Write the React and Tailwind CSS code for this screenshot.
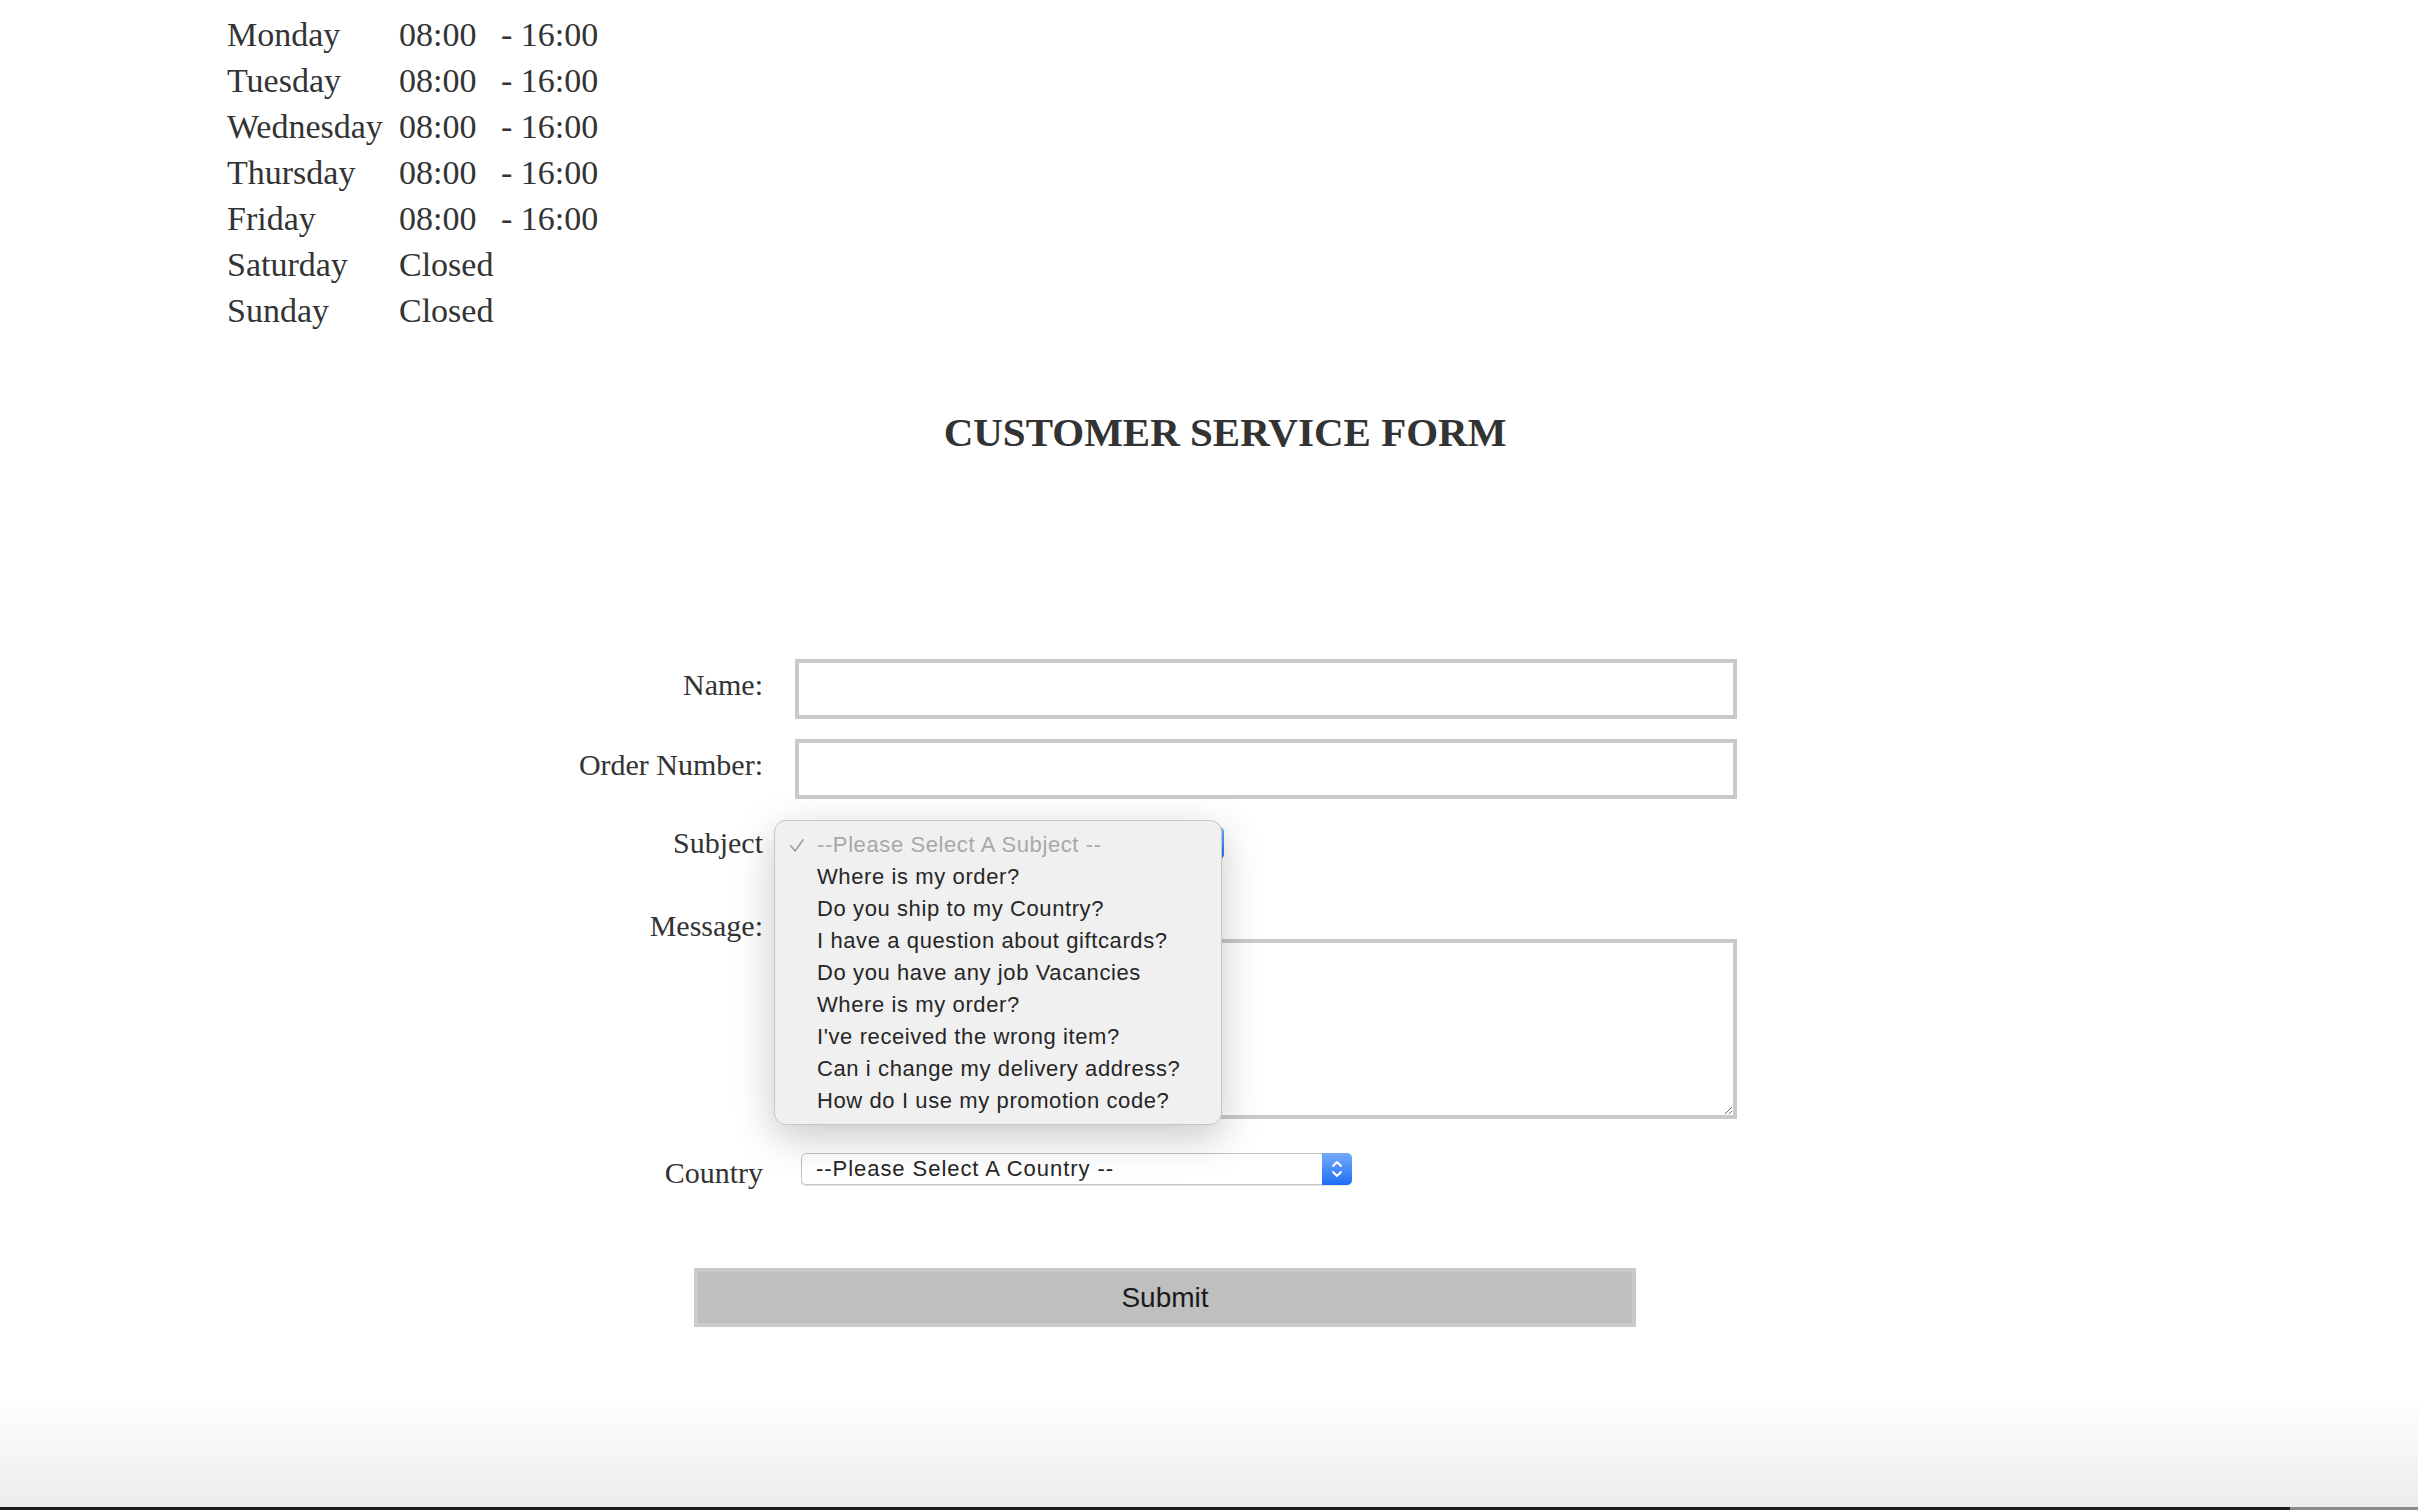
import React from 'react';

const hours = [
  ['Monday', true],
  ['Tuesday', true],
  ['Wednesday', true],
  ['Thursday', true],
  ['Friday', true],
  ['Saturday', false],
  ['Sunday', false],
];

const subjects = [
  'Where is my order?',
  'Do you ship to my Country?',
  'I have a question about giftcards?',
  'Do you have any job Vacancies',
  'Where is my order?',
  "I've received the wrong item?",
  'Can i change my delivery address?',
  'How do I use my promotion code?',
];

function SelectBox({ text, width }) {
  return (
    <div
      className={`flex h-[32px] ${width} items-stretch rounded-[5px] border border-[#c2c2c2] bg-white shadow-[0_1px_1px_rgba(0,0,0,0.12)]`}
    >
      <span className="flex-1 truncate pl-[14px] font-['Liberation_Sans',sans-serif] text-[22px] leading-[30px] tracking-[0.95px] text-[#262626]">
        {text}
      </span>
      <span className="-my-px -mr-px flex w-[30px] items-center justify-center rounded-r-[5px] bg-linear-to-b from-[#74aaf8] to-[#1a6cf6]">
        <svg width="12" height="20" viewBox="0 0 12 20" fill="none" stroke="white" strokeWidth="2" strokeLinecap="round" strokeLinejoin="round">
          <path d="M2 7 L6 3 L10 7" />
          <path d="M2 13 L6 17 L10 13" />
        </svg>
      </span>
    </div>
  );
}

function SubjectMenu() {
  return (
    <div className="absolute left-[774px] top-0 z-10 w-[448px] rounded-[12px] border border-[#c6c6c6] bg-[#f0f0f0] pb-[7px] pt-[8px] shadow-[0_12px_40px_rgba(0,0,0,0.22)] font-['Liberation_Sans',sans-serif] text-[22px] leading-[32px] tracking-[0.6px]">
      <div className="flex items-center text-[#a8a8a8]">
        <span className="flex w-[42px] justify-center pl-[2px]">
          <svg width="16" height="15" viewBox="0 0 16 15" fill="none" stroke="#a3a3a3" strokeWidth="1.8" strokeLinecap="round" strokeLinejoin="round">
            <path d="M2 8 L6 13 L14 2" />
          </svg>
        </span>
        <span>--Please Select A Subject --</span>
      </div>
      {subjects.map((s, i) => (
        <div key={i} className="pl-[42px] text-[#262626]">
          {s}
        </div>
      ))}
    </div>
  );
}

export default function App() {
  return (
    <div className="flex h-[1510px] flex-col overflow-hidden bg-white font-['Liberation_Serif',serif] text-[#333333]">
      {/* Opening hours */}
      <div className="pl-[227px] pt-[12px] text-[34px] leading-[46px]">
        {hours.map(([day, open]) => (
          <div key={day} className="flex">
            <span className="w-[172px]">{day}</span>
            {open ? (
              <>
                <span className="w-[102px]">08:00</span>
                <span>- 16:00</span>
              </>
            ) : (
              <span>Closed</span>
            )}
          </div>
        ))}
      </div>

      <h1 className="mt-[74px] pl-[32px] text-center text-[41px] font-bold leading-[48px]">
        CUSTOMER SERVICE FORM
      </h1>

      {/* Form */}
      <form className="mt-[203px] flex flex-col text-[30px] leading-[36px]">
        <div className="flex">
          <label className="w-[763px] pt-[8px] text-right">Name:</label>
          <input type="text" className="ml-[32px] h-[60px] w-[942px] border-4 border-[#cacaca] bg-white outline-none" />
        </div>

        <div className="mt-[20px] flex">
          <label className="w-[763px] pt-[8px] text-right">Order Number:</label>
          <input type="text" className="ml-[32px] h-[60px] w-[942px] border-4 border-[#cacaca] bg-white outline-none" />
        </div>

        <div className="relative mt-[21px] flex">
          <label className="w-[763px] pt-[5px] text-right">Subject</label>
          {/* the select itself, mostly covered by its open menu */}
          <div className="ml-[38px] mt-[7px]">
            <SelectBox text="" width="w-[423px]" />
          </div>
          <SubjectMenu />
        </div>

        <div className="mt-[47px] flex">
          <label className="w-[763px] text-right">Message:</label>
          <textarea className="ml-[32px] mt-[31px] h-[180px] w-[942px] border-4 border-[#cacaca] bg-white outline-none" />
        </div>

        <div className="mt-[34px] flex">
          <label className="w-[763px] pt-[2px] text-right">Country</label>
          <div className="ml-[38px]">
            <SelectBox text="--Please Select A Country --" width="w-[551px]" />
          </div>
        </div>

        <button
          type="button"
          className="ml-[694px] mt-[77px] h-[59px] w-[942px] border-4 border-[#cacaca] bg-[#bfbfbf] font-['Liberation_Sans',sans-serif] text-[28px] leading-[32px] text-[#1a1a1a]"
        >
          Submit
        </button>
      </form>

      {/* Bottom fade and window edge */}
      <div className="mt-auto h-[110px] bg-linear-to-b from-white to-[#ececec]" />
      <div className="flex h-[3px] bg-[#1b1b1b]">
        <div className="flex-1" />
        <div className="w-[128px] bg-[#8a8a8a]" />
      </div>
    </div>
  );
}
